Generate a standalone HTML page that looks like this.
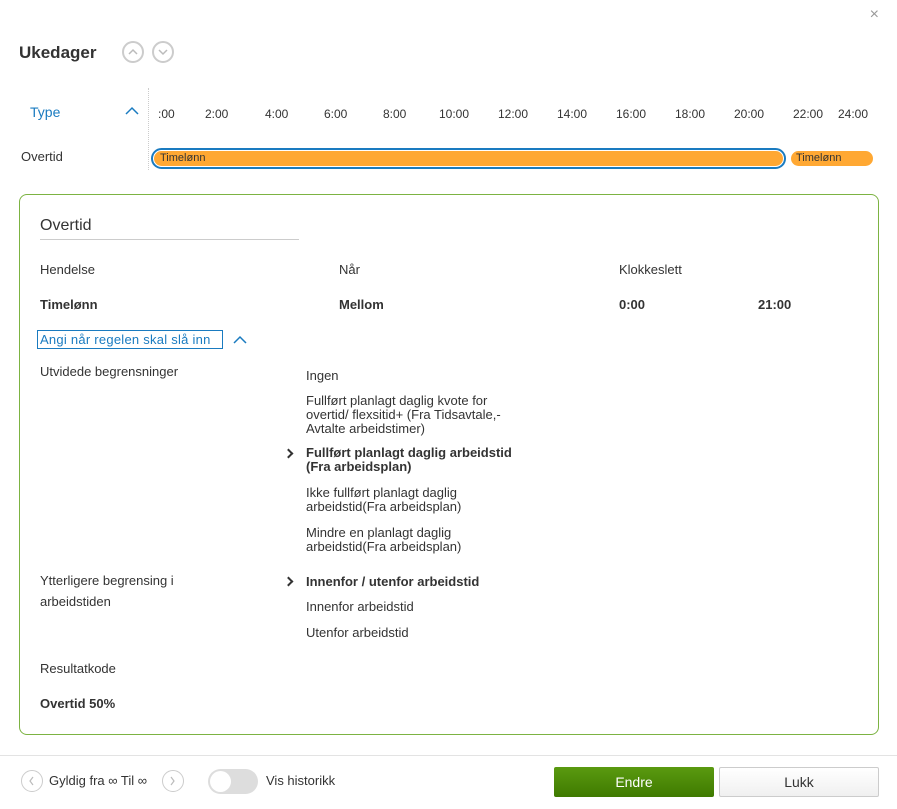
<!DOCTYPE html>
<html><head><meta charset="utf-8"><style>
*{box-sizing:border-box;margin:0;padding:0}
body{width:897px;height:809px;background:#fff;font-family:"Liberation Sans",sans-serif;font-size:13px;color:#333;position:relative;overflow:hidden}
.a{position:absolute;white-space:nowrap}
.b{font-weight:bold}
.circ{position:absolute;width:22px;height:22px;border:2px solid #ccc;border-radius:50%}
.t{position:absolute;top:107px;font-size:12px}
.lh{line-height:14px}
.chev{position:absolute;width:7px;height:7px;border-top:2px solid #333;border-right:2px solid #333;transform:rotate(45deg)}
</style></head><body>
<div class="a" style="right:18px;top:6px;font-size:16px;color:#999">×</div>
<div class="a b" style="left:19px;top:43px;font-size:17px">Ukedager</div>
<div class="circ" style="left:122px;top:41px"><svg width="18" height="18" viewBox="0 0 18 18" style="position:absolute;left:0;top:0"><path d="M5 11 L9 7 L13 11" fill="none" stroke="#bbb" stroke-width="1.5"/></svg></div>
<div class="circ" style="left:152px;top:41px"><svg width="18" height="18" viewBox="0 0 18 18" style="position:absolute;left:0;top:0"><path d="M5 7 L9 11 L13 7" fill="none" stroke="#bbb" stroke-width="1.5"/></svg></div>
<div class="a" style="left:30px;top:104px;font-size:14px;color:#1a7bc0">Type</div>
<svg class="a" style="left:125px;top:106px" width="14" height="10"><path d="M1 8 L7 2 L13 8" fill="none" stroke="#1a7bc0" stroke-width="1.5"/></svg>
<div class="a" style="left:148px;top:88px;height:82px;border-left:1px dotted #ccc"></div>
<div class="t" style="left:158px">:00</div><div class="t" style="left:205px">2:00</div><div class="t" style="left:265px">4:00</div><div class="t" style="left:324px">6:00</div><div class="t" style="left:383px">8:00</div><div class="t" style="left:439px">10:00</div><div class="t" style="left:498px">12:00</div><div class="t" style="left:557px">14:00</div><div class="t" style="left:616px">16:00</div><div class="t" style="left:675px">18:00</div><div class="t" style="left:734px">20:00</div><div class="t" style="left:793px">22:00</div><div class="t" style="left:838px">24:00</div>
<div class="a" style="left:21px;top:149px">Overtid</div>
<div class="a" style="left:151px;top:148px;width:635px;height:21px;border:2px solid #1a7bc0;border-radius:11px;padding:1px"><div style="background:#ffa833;height:15px;border-radius:8px;font-size:11px;padding-left:6px;line-height:15px">Timelønn</div></div>
<div class="a" style="left:791px;top:151px;width:82px;height:15px;background:#ffa833;border-radius:8px;font-size:11px;padding-left:5px;line-height:15px">Timelønn</div>
<div class="a" style="left:19px;top:194px;width:860px;height:541px;border:1px solid #7cb342;border-radius:8px"></div>
<div class="a" style="left:40px;top:217px;font-size:16px">Overtid</div>
<div class="a" style="left:40px;top:239px;width:259px;border-top:1px solid #ccc"></div>
<div class="a" style="left:40px;top:262px">Hendelse</div><div class="a" style="left:339px;top:262px">Når</div><div class="a" style="left:619px;top:262px">Klokkeslett</div>
<div class="a b" style="left:40px;top:297px">Timelønn</div><div class="a b" style="left:339px;top:297px">Mellom</div><div class="a b" style="left:619px;top:297px">0:00</div><div class="a b" style="left:758px;top:297px">21:00</div>
<div class="a" style="left:37px;top:330px;width:186px;border:1px solid #1a7bc0;padding:1px 2px;color:#1a7bc0;font-size:13px;letter-spacing:0.25px">Angi når regelen skal slå inn</div>
<svg class="a" style="left:233px;top:335px" width="14" height="10"><path d="M1 8 L7 2 L13 8" fill="none" stroke="#1a7bc0" stroke-width="1.5"/></svg>
<div class="a" style="left:40px;top:364px">Utvidede begrensninger</div>
<div class="a" style="left:306px;top:368px">Ingen</div>
<div class="a lh" style="left:306px;top:394px">Fullført planlagt daglig kvote for<br>overtid/ flexsitid+ (Fra Tidsavtale,-<br>Avtalte arbeidstimer)</div>
<div class="chev" style="left:285px;top:450px"></div>
<div class="a lh b" style="left:306px;top:446px">Fullført planlagt daglig arbeidstid<br>(Fra arbeidsplan)</div>
<div class="a lh" style="left:306px;top:486px">Ikke fullført planlagt daglig<br>arbeidstid(Fra arbeidsplan)</div>
<div class="a lh" style="left:306px;top:526px">Mindre en planlagt daglig<br>arbeidstid(Fra arbeidsplan)</div>
<div class="a" style="left:40px;top:570px;line-height:21px">Ytterligere begrensing i<br>arbeidstiden</div>
<div class="chev" style="left:285px;top:578px"></div>
<div class="a b" style="left:306px;top:574px">Innenfor / utenfor arbeidstid</div>
<div class="a" style="left:306px;top:599px">Innenfor arbeidstid</div>
<div class="a" style="left:306px;top:625px">Utenfor arbeidstid</div>
<div class="a" style="left:40px;top:661px">Resultatkode</div>
<div class="a b" style="left:40px;top:696px">Overtid 50%</div>
<div class="a" style="left:0;top:755px;width:897px;border-top:1px solid #e3e3e3"></div>
<div class="circ" style="left:21px;top:770px;border-width:1.5px"><svg width="19" height="19" style="position:absolute;left:0;top:0"><path d="M11 6 L8 10 L11 14" fill="none" stroke="#bbb" stroke-width="1.2"/></svg></div>
<div class="a" style="left:49px;top:773px">Gyldig fra ∞ Til ∞</div>
<div class="circ" style="left:162px;top:770px;border-width:1.5px"><svg width="19" height="19" style="position:absolute;left:0;top:0"><path d="M8 6 L11 10 L8 14" fill="none" stroke="#bbb" stroke-width="1.2"/></svg></div>
<div class="a" style="left:208px;top:769px;width:50px;height:25px;border-radius:13px;background:#ddd"><div style="position:absolute;left:2px;top:2px;width:21px;height:21px;border-radius:50%;background:#fff"></div></div>
<div class="a" style="left:266px;top:773px">Vis historikk</div>
<div class="a" style="left:554px;top:767px;width:160px;height:30px;background:linear-gradient(#5a9a10,#3f7a00);border-radius:2px;color:#fff;text-align:center;line-height:30px;font-size:14px">Endre</div>
<div class="a" style="left:719px;top:767px;width:160px;height:30px;background:linear-gradient(#fff,#f0f0f0);border:1px solid #ccc;border-radius:2px;text-align:center;line-height:28px;font-size:14px">Lukk</div>
</body></html>
